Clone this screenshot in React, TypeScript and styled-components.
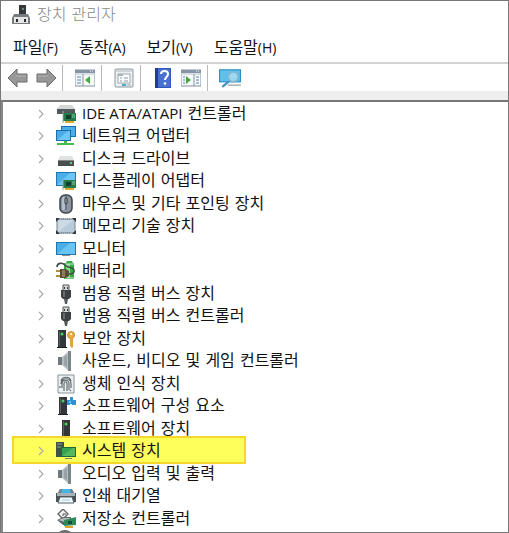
import React from 'react';
import styled, { createGlobalStyle } from 'styled-components';

const GlobalStyle = createGlobalStyle`
  * { box-sizing: border-box; }
  body {
    margin: 0;
    background: #fff;
    color: #111;
    font-family: "Open Sans", "Noto Sans CJK KR", sans-serif;
    font-size: 16px;
    line-height: 22px;
  }
  button { font: inherit; color: inherit; border: 0; padding: 0; background: none; }
`;

const Window = styled.div`
  display: flex;
  flex-direction: column;
  height: 100vh;
  overflow: hidden;
  border: 1px solid #777;
  background: #fff;
`;

const TitleBar = styled.header`
  display: flex;
  align-items: center;
  gap: 6px;
  flex: none;
  height: 28px;
  padding-left: 10px;
`;

const Title = styled.h1`
  margin: 0;
  font-family: "DejaVu Sans", "Noto Sans CJK KR", sans-serif;
  font-size: 16px;
  font-weight: 300;
  color: #888;
`;

const MenuBar = styled.nav`
  display: flex;
  align-items: center;
  gap: 21px;
  flex: none;
  height: 33px;
  padding: 4px 0 0 12px;
`;

const MenuButton = styled.button`
  white-space: nowrap;
`;

const AccessKey = styled.span`
  font-size: 14px;
`;

const Toolbar = styled.div`
  display: flex;
  align-items: center;
  flex: none;
  height: 38px;
  padding: 0 3px;
  border-top: 2px solid #d2d2d2;
  border-bottom: 9px solid #eee;
`;

const ToolButton = styled.button`
  display: flex;
  justify-content: center;
  width: 28px;
`;

const Separator = styled.span`
  width: 1px;
  height: 26px;
  margin: 0 8px 0 0;
  background: #b8b8b8;
`;

const Group = styled.div`
  display: flex;
  align-items: center;
  margin-right: 2px;
`;

const TreePane = styled.main`
  flex: 1;
  min-height: 0;
  overflow: hidden;
  border-top: 2px solid #777;
  border-left: 2px solid #888;
`;

const Tree = styled.ul`
  margin: 0;
  padding: 0 0 0 9px;
  list-style: none;
`;

const Row = styled.li`
  display: flex;
  align-items: center;
  height: 23px;
  white-space: nowrap;
  &:nth-child(even) { height: 22px; }
`;

const MarkedRow = styled(Row)`
  position: relative;
  isolation: isolate;
  width: 234px;
  &::before {
    content: "";
    position: absolute;
    inset: -4px 0 -2px;
    z-index: -1;
    background: #ffff5c;
    border: 2px solid #f5d62a;
  }
`;

const Expander = styled.button`
  display: flex;
  justify-content: center;
  width: 12px;
  margin: 0 8px 0 23px;
`;

const IconCell = styled.span`
  display: flex;
  justify-content: center;
  width: 22px;
  margin-right: 5px;
`;

const Label = styled.span`
  font-family: "DejaVu Sans", "Noto Sans CJK KR", sans-serif;
`;

const Latin = styled.span`
  font-family: "Open Sans", sans-serif;
  font-size: 15px;
`;

const Svg = ({ children, size = 20 }: { children: React.ReactNode; size?: number }) => (
  <svg width={size} height={size} viewBox="0 0 20 20" aria-hidden="true">{children}</svg>
);

const Card = () => (
  <g>
    <path d="M7 9h13v8H7z" fill="#27784b" />
    <path d="M7 7v12" stroke="#9aa" strokeWidth="1" />
    <path d="M10 11h5v4h-5z" fill="#123f31" />
    <path d="M16 11h3M16 13h3" stroke="#7fd09a" />
    <path d="M9 17h9v2H9z" fill="#e2a62b" />
  </g>
);

const Tower = ({ x = 6 }: { x?: number }) => (
  <g>
    <path d={`M${x} 1h8v17h-8z`} fill="#333739" />
    <path d={`M${x + 1} 2h1v15h-1z`} fill="#596064" />
    <circle cx={x + 4} cy="5" r="1.5" fill="#45d95b" />
    <path d={`M${x - 1} 18h10v1h-10z`} fill="#1b1e20" />
  </g>
);

const Speaker = () => (
  <Svg>
    <path d="M2 6h5v8H2z" fill="#6f787d" />
    <path d="M6 6l7-6v20l-7-6z" fill="#b4bcc0" />
    <path d="M8 6l3-2v12l-3-2z" fill="#98a2a7" />
    <path d="M12 0h3v20h-3z" fill="#7b858c" />
  </Svg>
);

const Usb = () => (
  <Svg>
    <path d="M7 1h6v6H7z" fill="#d6d9da" stroke="#555" />
    <path d="M8 3h1v2H8zM11 3h1v2h-1z" fill="#333" />
    <path d="M5 6h10v7l-2 2H7l-2-2z" fill="#3e4143" />
    <path d="M7 7h2v6H7z" fill="#686c6e" />
    <path d="M8 15h4l-1 5H9z" fill="#55595b" />
  </Svg>
);

const icons: Record<string, React.ReactNode> = {
  ide: <Svg><path d="M4 1h12l3 4H1z" fill="#d4d7d7" /><path d="M1 5h18v5H1z" fill="#54595b" /><Card /></Svg>,
  network: (
    <Svg>
      <path d="M5 0h15v11H5z" fill="#1b6eaa" /><path d="M6 1h13v9H6z" fill="#4aaeea" />
      <path d="M0 4h15v11H0z" fill="#1b6eaa" /><path d="M1 5h13v9H1z" fill="#49ace8" />
      <path d="M1 14L12 5h2v9z" fill="#6cc6f5" />
      <path d="M8 15h3v2h7v2H1v-2h7z" fill="#47ba50" />
    </Svg>
  ),
  disk: (
    <Svg>
      <path d="M4 7h12l2 4H2z" fill="#e0e2e2" />
      <path d="M2 11h16v6H2z" fill="#4a4e50" />
      <path d="M2 11h16v1H2z" fill="#84888a" />
      <path d="M14 13h2v2h-2z" fill="#44dd66" />
    </Svg>
  ),
  display: (
    <Svg>
      <path d="M0 1h20v14H0z" fill="#2375ad" /><path d="M1 2h18v12H1z" fill="#4aaeea" />
      <path d="M1 14L14 2h5v12z" fill="#6cc6f5" /><Card />
    </Svg>
  ),
  mouse: (
    <Svg>
      <rect x="4" y="1" width="12" height="18" rx="5" fill="#8a97a3" stroke="#3d444a" strokeWidth="1.5" />
      <rect x="6" y="3" width="3" height="13" rx="1.5" fill="#b3bfca" />
      <path d="M10 2v14" stroke="#50575e" />
      <rect x="9" y="4" width="2" height="6" rx="1" fill="#c4ced5" stroke="#252a2d" />
    </Svg>
  ),
  memory: (
    <Svg>
      <rect x="1" y="3" width="18" height="14" rx="1" fill="#b8cbdb" stroke="#788894" />
      <path d="M2 4h16L2 16z" fill="#ccdae6" />
      <path d="M0 2h4L0 6zM20 2v4l-4-4zM0 18v-4l4 4zM20 18h-4l4-4z" fill="#32383d" />
      <path d="M5 3h10M5 17h10" stroke="#6b7780" strokeDasharray="1 1" />
    </Svg>
  ),
  monitor: (
    <Svg>
      <path d="M0 3h20v13H0z" fill="#2375ad" /><path d="M1 4h18v11H1z" fill="#4caee8" />
      <path d="M1 15L14 4h5v11z" fill="#68c5f3" /><path d="M6 16h8v1H6z" fill="#7f9099" />
    </Svg>
  ),
  battery: (
    <Svg>
      <path d="M8 2h2l1-2h5l1 2h1v16H8z" fill="#2fae45" />
      <path d="M10 3h4v14h-4z" fill="#86e086" />
      <path d="M9 3h9M9 17h9" stroke="#d6ddd7" />
      <path d="M1 6c0-4 5-5 8-2 3 4 8 1 9 5 1 3-2 4-5 4" fill="none" stroke="#454b45" strokeWidth="1.6" />
      <path d="M4 8h6l3 2v5l-3 2H4z" fill="#5a4f36" />
      <path d="M6 9h3v7H6z" fill="#8a7c58" />
      <path d="M0 10h4M0 15h4" stroke="#b18c3c" strokeWidth="2" />
    </Svg>
  ),
  usb: <Usb />,
  security: (
    <Svg>
      <Tower x={2} />
      <circle cx="15" cy="6" r="3.5" fill="#e8ae48" stroke="#c98f2c" />
      <circle cx="15" cy="5" r="1" fill="#fff" />
      <path d="M14 9h3v9l-1 1-2-2z" fill="#e3a33b" />
    </Svg>
  ),
  sound: <Speaker />,
  biometric: (
    <Svg>
      <path d="M2 1h16v18H2z" fill="#edf1f2" stroke="#899398" />
      <path d="M5 7c1-5 9-5 10 0M5 10c0-7 10-7 10 0v4M6 14v-4c0-5 7-5 7 0v6M8 17v-7c0-3 3-3 3 0v7M4 12v2M15 16l-1 1" fill="none" stroke="#626b6f" strokeWidth="1.2" />
    </Svg>
  ),
  component: (
    <Svg>
      <Tower x={3} />
      <path d="M11 4h3V1h3v3h3v5h-4V8h-2v1h-3z" fill="#2c93dc" />
      <path d="M13 5h2v2h-2z" fill="#7cc2f0" />
    </Svg>
  ),
  software: <Svg><Tower x={6} /></Svg>,
  system: (
    <Svg>
      <path d="M0 1h8v15H0z" fill="#3c5346" /><path d="M1 3h5M1 6h4" stroke="#8da092" />
      <path d="M5 6h15v10H5z" fill="#1c6b37" /><path d="M6 7h13v8H6z" fill="#35a350" />
      <path d="M6 15L17 7h2v8z" fill="#55b85c" /><path d="M9 17h7v1H9z" fill="#70806d" />
    </Svg>
  ),
  printer: (
    <Svg>
      <path d="M4 3h12l3 5H1z" fill="#787d81" /><path d="M6 3h8l1 4H5z" fill="#43b5e8" />
      <path d="M0 7h20v9H0z" fill="#4b5257" /><path d="M1 7h18v3H1z" fill="#a7b0b4" />
      <path d="M4 11h12l2 6H2z" fill="#f4f8f9" stroke="#52606a" />
      <path d="M6 14h8" stroke="#8fcfe4" />
    </Svg>
  ),
  storage: (
    <Svg>
      <path d="M7 0l5 5-5 5-5-5z" fill="#f0f1f1" stroke="#666" strokeWidth="1.4" />
      <path d="M10 5H7v2" fill="none" stroke="#555" />
      <path d="M1 11l6-3h8v8H7z" fill="#606669" /><path d="M2 11l6-2h7l-6 4z" fill="#b5bbbd" />
      <path d="M8 11l12-3v8l-12 1z" fill="#2f8a5a" /><path d="M12 12h4v3h-4z" fill="#164c39" />
      <path d="M9 17h8v2H9z" fill="#e0a32c" />
    </Svg>
  ),
  portable: <Svg size={22}><circle cx="9" cy="9" r="9" fill="#666b6e" /></Svg>,
};

const Arrow = ({ forward = false }: { forward?: boolean }) => (
  <Svg>
    <path
      d={forward ? 'M20 10l-9-9v5H1v8h10v5z' : 'M0 10l9-9v5h10v8H9v5z'}
      fill="#989898" stroke="#6c6c6c" strokeLinejoin="round"
    />
    <path d={forward ? 'M2 8h10' : 'M8 8h10'} stroke="#b1b1b1" />
  </Svg>
);

const Console = ({ flip = false }: { flip?: boolean }) => (
  <Svg>
    <path d="M0 2h20v16H0z" fill="#f7f9fa" stroke="#8391a0" />
    <path d="M0 2h20v3H0z" fill="#8494a5" />
    <path d="M15 3h1M17 3h1" stroke="#fff" />
    <path d="M0 6h20" stroke="#bac5cd" />
    <path d={flip ? 'M13 6v12' : 'M8 6v12'} stroke="#8391a0" />
    <path d={flip ? 'M15 9h3M15 12h3M15 15h3M2 9h2M2 12h2M2 15h2' : 'M2 9h4M2 12h4M2 15h4'} stroke="#5384b9" />
    <path d={flip ? 'M5 8l5 4-5 4z' : 'M15 8v8l-5-4z'} fill="#48a83d" />
  </Svg>
);

const PropertiesIcon = () => (
  <Svg>
    <rect x="1" y="1" width="18" height="18" rx="1" fill="#edf0f1" stroke="#8b969e" />
    <path d="M2 3h16" stroke="#b0bac0" />
    <path d="M4 6h12v9H4z" fill="#fff" stroke="#9ba7af" />
    <path d="M4 6h5v2H4z" fill="#a9b4bd" />
    <path d="M6 10h2M10 10h4M6 13h2M10 13h4" stroke="#8296a7" />
    <path d="M8 17h4" stroke="#44acd1" strokeWidth="2" /><path d="M13 17h4" stroke="#9ca8ae" />
  </Svg>
);

const HelpIcon = () => (
  <Svg>
    <path d="M2 0h16v20H2z" fill="#3157bd" /><path d="M2 0h3v20H2z" fill="#203c93" />
    <path d="M5 1h12v18H5z" fill="#4770d0" />
    <path d="M8 6c0-4 7-4 7 0 0 3-3 3-3 6" fill="none" stroke="#fff" strokeWidth="2" />
    <circle cx="12" cy="15.5" r="1.3" fill="#fff" />
  </Svg>
);

const ScanIcon = () => (
  <Svg size={22}>
    <path d="M0 2h20v12H0z" fill="#2c8cc3" /><path d="M1 3h18v10H1z" fill="#5fc0ed" />
    <path d="M8 16h12v1H8z" fill="#87949c" />
    <circle cx="13" cy="9" r="4.5" fill="#9ad8f3" stroke="#86b6d0" strokeWidth="1.5" />
    <path d="M9 13l-6 5" stroke="#4b91bd" strokeWidth="2" />
  </Svg>
);

const AppIcon = () => (
  <Svg>
    <path d="M8 0h7v11H8z" fill="#34383b" /><path d="M11 3h2v2h-2z" fill="#629275" />
    <path d="M3 9h14l2 4v6H1v-6z" fill="#777b7d" />
    <path d="M3 12h14v6H3z" fill="#e5e7e7" />
    <path d="M5 14h2v3H5zM13 14h2v3h-2z" fill="#25292b" />
  </Svg>
);

const menus = [['파일', 'F'], ['동작', 'A'], ['보기', 'V'], ['도움말', 'H']];

const devices: { icon: string; name: string; latin?: string; marked?: boolean }[] = [
  { icon: 'ide', latin: 'IDE ATA/ATAPI', name: '컨트롤러' },
  { icon: 'network', name: '네트워크 어댑터' },
  { icon: 'disk', name: '디스크 드라이브' },
  { icon: 'display', name: '디스플레이 어댑터' },
  { icon: 'mouse', name: '마우스 및 기타 포인팅 장치' },
  { icon: 'memory', name: '메모리 기술 장치' },
  { icon: 'monitor', name: '모니터' },
  { icon: 'battery', name: '배터리' },
  { icon: 'usb', name: '범용 직렬 버스 장치' },
  { icon: 'usb', name: '범용 직렬 버스 컨트롤러' },
  { icon: 'security', name: '보안 장치' },
  { icon: 'sound', name: '사운드, 비디오 및 게임 컨트롤러' },
  { icon: 'biometric', name: '생체 인식 장치' },
  { icon: 'component', name: '소프트웨어 구성 요소' },
  { icon: 'software', name: '소프트웨어 장치' },
  { icon: 'system', name: '시스템 장치', marked: true },
  { icon: 'sound', name: '오디오 입력 및 출력' },
  { icon: 'printer', name: '인쇄 대기열' },
  { icon: 'storage', name: '저장소 컨트롤러' },
];

const App = () => (
  <>
    <GlobalStyle />
    <Window>
      <TitleBar><AppIcon /><Title>장치 관리자</Title></TitleBar>
      <MenuBar>
        {menus.map(([name, key]) => (
          <MenuButton key={key} type="button">{name}<AccessKey>({key})</AccessKey></MenuButton>
        ))}
      </MenuBar>
      <Toolbar role="toolbar">
        <Group>
          <ToolButton type="button" aria-label="뒤로"><Arrow /></ToolButton>
          <ToolButton type="button" aria-label="앞으로"><Arrow forward /></ToolButton>
        </Group>
        <Group><Separator /><ToolButton type="button" aria-label="콘솔 트리"><Console /></ToolButton></Group>
        <Group><Separator /><ToolButton type="button" aria-label="속성"><PropertiesIcon /></ToolButton></Group>
        <Group>
          <Separator />
          <ToolButton type="button" aria-label="도움말"><HelpIcon /></ToolButton>
          <ToolButton type="button" aria-label="작업 창"><Console flip /></ToolButton>
        </Group>
        <Group><Separator /><ToolButton type="button" aria-label="하드웨어 변경 사항 검색"><ScanIcon /></ToolButton></Group>
      </Toolbar>
      <TreePane>
        <Tree>
          {devices.map((d) => {
            const Item = d.marked ? MarkedRow : Row;
            return (
              <Item key={d.name}>
                <Expander type="button" aria-label={`${d.name} 확장`}>
                  <svg width="6" height="10" viewBox="0 0 6 10"><path d="M1 1l4 4-4 4" fill="none" stroke="#aaa" strokeWidth="1.2" /></svg>
                </Expander>
                <IconCell>{icons[d.icon]}</IconCell>
                <Label>{d.latin && <><Latin>{d.latin}</Latin>{' '}</>}{d.name}</Label>
              </Item>
            );
          })}
          <Row aria-hidden="true">
            <Expander as="span" />
            <IconCell>{icons.portable}</IconCell>
          </Row>
        </Tree>
      </TreePane>
    </Window>
  </>
);

export default App;
